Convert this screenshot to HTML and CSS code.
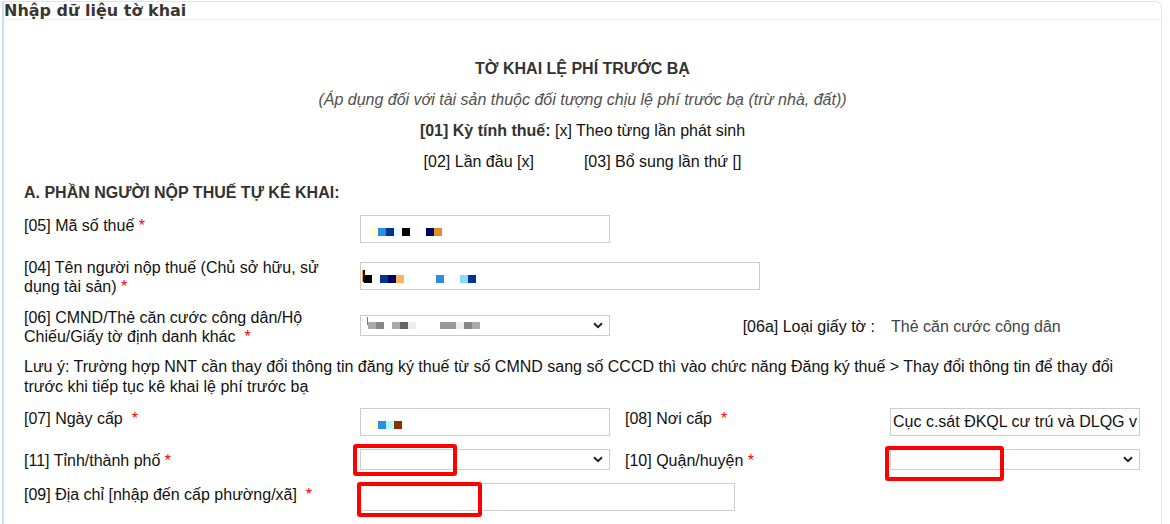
FILE: index.html
```html
<!DOCTYPE html>
<html lang="vi">
<head>
<meta charset="utf-8">
<title>Nhập dữ liệu tờ khai</title>
<link rel="stylesheet" href="styles.css">
</head>
<body>
<div class="panel">
  <div class="head">Nhập dữ liệu tờ khai</div>
  <div class="content">
    <div class="intro">
      <div class="line title">TỜ KHAI LỆ PHÍ TRƯỚC BẠ</div>
      <div class="line sub">(Áp dụng đối với tài sản thuộc đối tượng chịu lệ phí trước bạ (trừ nhà, đất))</div>
      <div class="line"><b class="strong">[01] Kỳ tính thuế:</b> [x] Theo từng lần phát sinh</div>
      <div class="line pair"><span>[02] Lần đầu [x]</span><span>[03] Bổ sung lần thứ []</span></div>
      <div class="line section">A. PHẦN NGƯỜI NỘP THUẾ TỰ KÊ KHAI:</div>
    </div>

    <div class="row r05">
      <div class="lbl">[05] Mã số thuế <span class="req">*</span></div>
      <div class="field"><div class="inp w250"><span class="pix"><i class="ly"></i><i class="bl"></i><i class="nv"></i><i class="cy"></i><i class="bk"></i><i></i><i></i><i class="nv2"></i><i class="or"></i></span></div></div>
    </div>

    <div class="row r04">
      <div class="lbl">[04] Tên người nộp thuế (Chủ sở hữu, sử dụng tài sản) <span class="req">*</span></div>
      <div class="field span2"><div class="inp w400"><span class="pix p4"><b class="stroke"></b><i class="bk"></i><i></i><i class="nv"></i><i class="nv2"></i><i class="pe"></i><i></i><i></i><i></i><i></i><i class="bl"></i><i></i><i></i><i class="lb"></i><i class="nv"></i></span></div></div>
    </div>

    <div class="row r06">
      <div class="lbl">[06] CMND/Thẻ căn cước công dân/Hộ Chiếu/Giấy tờ định danh khác &nbsp;<span class="req">*</span></div>
      <div class="field"><div class="sel w250"><span class="pix gray"><b class="stroke g"></b><i class="ga"></i><i class="g8"></i><i></i><i class="ga"></i><i class="g6"></i><i class="ge"></i><i></i><i></i><i></i><i class="g9"></i><i class="g9"></i><i class="ge"></i><i class="g8"></i><i class="ga"></i></span><svg class="chev" width="10" height="7" viewBox="0 0 10 7"><path d="M1 1.2 L5 5.2 L9 1.2" fill="none" stroke="#222" stroke-width="2"/></svg></div></div>
      <div class="lbl right">[06a] Loại giấy tờ :</div>
      <div class="val">Thẻ căn cước công dân</div>
    </div>

    <div class="note">Lưu ý: Trường hợp NNT cần thay đổi thông tin đăng ký thuế từ số CMND sang số CCCD thì vào chức năng Đăng ký thuế &gt; Thay đổi thông tin để thay đổi trước khi tiếp tục kê khai lệ phí trước bạ</div>

    <div class="row r07">
      <div class="lbl">[07] Ngày cấp &nbsp;<span class="req">*</span></div>
      <div class="field"><div class="inp w250"><span class="pix"><i class="ly"></i><i class="bl"></i><i class="cy2"></i><i class="br"></i></span></div></div>
      <div class="lbl">[08] Nơi cấp &nbsp;<span class="req">*</span></div>
      <div class="field"><div class="inp w250 txt">Cục c.sát ĐKQL cư trú và DLQG v</div></div>
    </div>

    <div class="row r11">
      <div class="lbl">[11] Tỉnh/thành phố <span class="req">*</span></div>
      <div class="field"><div class="sel w250"><span></span><svg class="chev" width="10" height="7" viewBox="0 0 10 7"><path d="M1 1.2 L5 5.2 L9 1.2" fill="none" stroke="#222" stroke-width="2"/></svg><div class="mark m11"></div></div></div>
      <div class="lbl">[10] Quận/huyện <span class="req">*</span></div>
      <div class="field"><div class="sel w250"><span></span><svg class="chev" width="10" height="7" viewBox="0 0 10 7"><path d="M1 1.2 L5 5.2 L9 1.2" fill="none" stroke="#222" stroke-width="2"/></svg><div class="mark m10"></div></div></div>
    </div>

    <div class="row r09">
      <div class="lbl">[09] Địa chỉ [nhập đến cấp phường/xã] &nbsp;<span class="req">*</span></div>
      <div class="field span2"><div class="inp w375"><div class="mark m09"></div></div></div>
    </div>
  </div>
</div>
</body>
</html>
```
FILE: styles.css
```css
html, body {
  margin: 0;
  padding: 0;
  background: #fff;
}
body {
  font-family: "Liberation Sans", Arial, sans-serif;
  font-size: 16px;
  color: #111;
  overflow: hidden;
}
.panel {
  margin: 1px 8px 0 2px;
  border: 1px solid #d5e6f7;
  border-left: 2px solid #cadff5;
  border-top-right-radius: 7px;
  height: 540px;
}
.head {
  height: 16px;
  padding-top: 1px;
  line-height: 16px;
  border-bottom: 1px solid #ebf3fc;
  font-family: "DejaVu Sans", Verdana, sans-serif;
  font-weight: bold;
  font-size: 16px;
  color: #3a3632;
  white-space: nowrap;
}
.content {
  padding: 0 0 0 20px;
}
.intro {
  padding-top: 33px;
  margin-left: -20px;
}
.line {
  line-height: 31px;
  height: 31px;
  text-align: center;
}
.title {
  font-weight: bold;
  color: #333;
}
.sub {
  font-style: italic;
  color: #505050;
}
.strong {
  color: #333;
}
.pair {
  display: flex;
  justify-content: center;
  gap: 50px;
}
.section {
  text-align: left;
  padding-left: 20px;
  font-weight: bold;
  color: #333;
}
.row {
  display: grid;
  grid-template-columns: 336px 265px 265px 250px;
  align-items: start;
}
.lbl {
  padding-right: 20px;
  line-height: 19px;
}
.lbl.right {
  text-align: right;
  padding-right: 15px;
}
.val {
  color: #444;
  padding-left: 1px;
  line-height: 19px;
}
.req {
  color: #f00;
}
.span2 {
  grid-column: span 2;
}
.field {
  position: relative;
}
.inp, .sel {
  box-sizing: border-box;
  border: 1px solid #ccc;
  background: #fff;
  position: relative;
}
.inp {
  height: 28px;
}
.sel {
  height: 21px;
  display: flex;
  align-items: center;
  justify-content: space-between;
}
.w250 { width: 250px; }
.w400 { width: 400px; }
.w375 { width: 375px; }
.chev {
  margin-right: 6px;
  flex: none;
}
.txt {
  line-height: 26px;
  padding-left: 2px;
  white-space: nowrap;
  overflow: hidden;
  color: #111;
}
.pix {
  display: flex;
  align-items: flex-start;
  padding: 12px 0 0 9px;
  position: relative;
}
.pix.p4 { padding-left: 3px; }
.pix.gray { padding: 0 0 0 7px; height: 8px; }
.pix i {
  display: block;
  width: 8px;
  height: 8px;
}
.pix.gray i { height: 7px; }
.pix .stroke {
  position: absolute;
  left: 1px;
  top: 7px;
  width: 2px;
  height: 12px;
  background: #111;
  border-left: 1px solid #e89a40;
}
.pix.gray .stroke {
  left: 6px;
  top: -5px;
  width: 1px;
  height: 8px;
  border: 0;
  background: #777;
}
.ly { background: #ffffdc; }
.bl { background: #2d8de0; }
.nv { background: #003393; }
.nv2 { background: #000063; }
.cy { background: #e2ffff; }
.cy2 { background: #b2fdff; }
.bk { background: #000; }
.or { background: #e08e30; }
.pe { background: #ffb25e; }
.lb { background: #8ed8ff; }
.br { background: #8a3000; }
.ga { background: #aaa; }
.g8 { background: #888; }
.g6 { background: #666; }
.g9 { background: #999; }
.ge { background: #eee; }

.r05 { height: 48px; }
.r05 .lbl { margin-top: 8px; }
.r05 .field { margin-top: 7px; }

.r04 { height: 50px; }
.r04 .lbl { margin-top: 2px; }
.r04 .field { margin-top: 6px; }

.r06 { height: 44px; }
.r06 .lbl { margin-top: 2px; }
.r06 .field { margin-top: 9px; }
.r06 .lbl.right, .r06 .val { margin-top: 11px; }

.note {
  box-sizing: border-box;
  width: 1130px;
  padding-top: 7px;
  height: 45px;
  line-height: 20px;
}

.r07 { height: 45px; }
.r07 .lbl { margin-top: 14px; }
.r07 .field { margin-top: 13px; }

.r11 { height: 38px; }
.r11 .lbl { margin-top: 11px; }
.r11 .field { margin-top: 9px; }

.r09 { height: 46px; }
.r09 .lbl { margin-top: 7px; }
.r09 .field { margin-top: 5px; }

.mark {
  position: absolute;
  border: 4px solid #f00;
  border-radius: 3px;
  box-sizing: border-box;
}
.m11 { left: -8px; top: -6px; width: 104px; height: 32px; }
.m10 { left: -6px; top: -4px; width: 119px; height: 35px; }
.m09 { left: -4px; top: -2px; width: 125px; height: 35px; }
```
